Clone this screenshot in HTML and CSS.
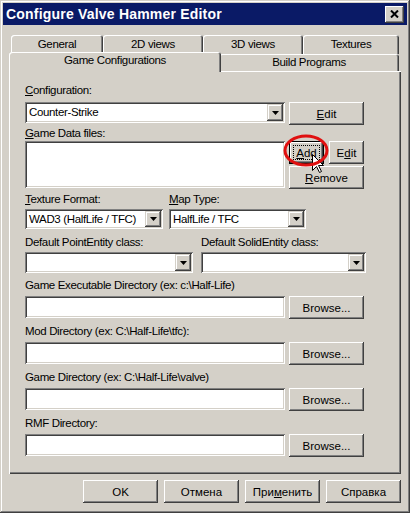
FILE: index.html
```html
<!DOCTYPE html>
<html lang="en">
<head>
    <meta charset="UTF-8">
    <title>Configure Valve Hammer Editor</title>
    <link rel="stylesheet" href="styles.css">
</head>
<body>
    <div class="window">
        <div class="titlebar">
            <span class="title">Configure Valve Hammer Editor</span>
            <button class="close">
                <svg width="9" height="8" viewBox="0 0 9 8"><path d="M1 0.5 L8 7.5 M8 0.5 L1 7.5" stroke="#000" stroke-width="2"/></svg>
            </button>
        </div>
        <div class="content">
            <div class="tabs">
                <div class="tabRow">
                    <div class="tab tabGeneral">General</div>
                    <div class="tab tab2d">2D views</div>
                    <div class="tab tab3d">3D views</div>
                    <div class="tab tabTextures">Textures</div>
                </div>
                <div class="tabRow front">
                    <div class="tab tabGame active">Game Configurations</div>
                    <div class="tab tabBuild">Build Programs</div>
                </div>
            </div>

            <div class="panel">
                <div class="label"><u>C</u>onfiguration:</div>
                <div class="row">
                    <div class="combo wide">
                        <span class="value">Counter-Strike</span>
                        <span class="drop"><svg width="7" height="4" viewBox="0 0 7 4"><path d="M0 0 H7 L3.5 4 Z" fill="#000"/></svg></span>
                    </div>
                    <button class="btn"><span><u>E</u>dit</span></button>
                </div>

                <div class="label gameData"><u>G</u>ame Data files:</div>
                <div class="row">
                    <div class="listbox"></div>
                    <div class="sideBtns">
                        <div class="btnPair">
                            <button class="btn small focused"><span class="focus"><u>A</u>dd</span></button>
                            <button class="btn small"><span>E<u>d</u>it</span></button>
                            <svg class="cursor" width="12" height="19" viewBox="0 0 12 19"><path d="M0.5 0.5 V16.5 L4.5 12.5 L7.5 18.5 L9.5 17.5 L6.5 11.5 H11.5 Z" fill="#fff" stroke="#000"/></svg>
                            <svg class="mark" width="46" height="33" viewBox="0 0 46 33"><ellipse cx="23" cy="16.5" rx="21" ry="14.5" fill="none" stroke="#e01010" stroke-width="3"/></svg>
                        </div>
                        <button class="btn"><span><u>R</u>emove</span></button>
                    </div>
                </div>

                <div class="pair texRow">
                    <div class="col colTex">
                        <div class="label"><u>T</u>exture Format:</div>
                        <div class="combo short">
                            <span class="value">WAD3 (HalfLife / TFC)</span>
                            <span class="drop"><svg width="7" height="4" viewBox="0 0 7 4"><path d="M0 0 H7 L3.5 4 Z" fill="#000"/></svg></span>
                        </div>
                    </div>
                    <div class="col colMap">
                        <div class="label"><u>M</u>ap Type:</div>
                        <div class="combo short">
                            <span class="value">HalfLife / TFC</span>
                            <span class="drop"><svg width="7" height="4" viewBox="0 0 7 4"><path d="M0 0 H7 L3.5 4 Z" fill="#000"/></svg></span>
                        </div>
                    </div>
                </div>

                <div class="pair entRow">
                    <div class="col colPoint">
                        <div class="label">Default PointEntity class:</div>
                        <div class="combo">
                            <span class="value"></span>
                            <span class="drop"><svg width="7" height="4" viewBox="0 0 7 4"><path d="M0 0 H7 L3.5 4 Z" fill="#000"/></svg></span>
                        </div>
                    </div>
                    <div class="col colSolid">
                        <div class="label">Default SolidEntity class:</div>
                        <div class="combo">
                            <span class="value"></span>
                            <span class="drop"><svg width="7" height="4" viewBox="0 0 7 4"><path d="M0 0 H7 L3.5 4 Z" fill="#000"/></svg></span>
                        </div>
                    </div>
                </div>

                <div class="label dirLabel">Game Executable Directory (ex: c:\Half-Life)</div>
                <div class="row">
                    <div class="field"></div>
                    <button class="btn"><span>Browse...</span></button>
                </div>

                <div class="label dirLabel">Mod Directory (ex: C:\Half-Life\tfc):</div>
                <div class="row">
                    <div class="field"></div>
                    <button class="btn"><span>Browse...</span></button>
                </div>

                <div class="label dirLabel">Game Directory (ex: C:\Half-Life\valve)</div>
                <div class="row">
                    <div class="field"></div>
                    <button class="btn"><span>Browse...</span></button>
                </div>

                <div class="label dirLabel">RMF Directory:</div>
                <div class="row">
                    <div class="field"></div>
                    <button class="btn"><span>Browse...</span></button>
                </div>
            </div>

            <div class="actions">
                <button class="btn">OK</button>
                <button class="btn">Отмена</button>
                <button class="btn">При<u>м</u>енить</button>
                <button class="btn">Справка</button>
            </div>
        </div>
    </div>
</body>
</html>
```

FILE: styles.css
```css
*{margin:0;padding:0;box-sizing:border-box;}
body{background:#d4d0c8;font-family:"Liberation Sans",Arial,sans-serif;font-size:11.5px;letter-spacing:-0.35px;color:#000;}
u{text-underline-offset:1px;}

/* window frame */
.window{width:410px;height:513px;padding:3px;background:#d4d0c8;
box-shadow:inset -1px -1px #404040,inset 1px 1px #d4d0c8,inset -2px -2px #808080,inset 2px 2px #fff;}
.titlebar{height:22px;background:#0a1a66;display:flex;align-items:center;justify-content:space-between;padding:0 3px 0 3px;}
.title{color:#fff;font-weight:bold;font-size:14px;letter-spacing:0.2px;}
.close{width:19px;height:17px;border:0;background:#d4d0c8;display:flex;align-items:center;justify-content:center;
box-shadow:inset -1px -1px #404040,inset 1px 1px #fff,inset -2px -2px #808080,inset 2px 2px #d4d0c8;}

.content{padding:10px 6px 0 6px;}

/* tabs */
.tabRow{display:flex;align-items:flex-start;margin-left:2px;}
.tab{height:19px;line-height:19px;text-align:center;background:#d4d0c8;border-radius:3px 3px 0 0;
box-shadow:inset 1px 1px #fff,inset -1px 0 #404040,inset -2px 0 #808080;}
.tabGeneral{width:92px;}
.tab2d{width:100px;}
.tab3d{width:100px;}
.tabTextures{width:96px;}
.front .tab{height:17px;line-height:17px;}
.tabGame{width:208px;}
.tabBuild{width:180px;line-height:18px;}
.front .tab.active{width:212px;height:20px;line-height:16px;margin:-2px -2px -1px;position:relative;z-index:1;}

/* page */
.panel{height:403px;padding:13px 0 0 16px;
box-shadow:inset 1px 1px #fff,inset -1px -1px #404040,inset -2px -2px #808080;}
.label{height:13px;line-height:13px;white-space:nowrap;margin-bottom:5px;}
.row{display:flex;align-items:flex-start;gap:4px;}
.gameData{margin-top:2px;margin-bottom:1px;}
.dirLabel{margin-top:6px;margin-bottom:4px;}

.field{width:260px;height:22px;background:#fff;
box-shadow:inset 1px 1px #808080,inset -1px -1px #fff,inset 2px 2px #404040,inset -2px -2px #d4d0c8;}
.listbox{width:260px;height:47px;background:#fff;
box-shadow:inset 1px 1px #808080,inset -1px -1px #fff,inset 2px 2px #404040,inset -2px -2px #d4d0c8;}

.combo{display:flex;align-items:stretch;height:21px;padding:2px;background:#fff;
box-shadow:inset 1px 1px #808080,inset -1px -1px #fff,inset 2px 2px #404040,inset -2px -2px #d4d0c8;}
.combo.wide{width:260px;}
.combo.short{height:20px;}
.combo .value{flex:1;padding-left:2px;line-height:17px;white-space:nowrap;overflow:hidden;}
.combo.short .value{line-height:16px;}
.drop{width:16px;display:flex;align-items:center;justify-content:center;background:#d4d0c8;
box-shadow:inset -1px -1px #404040,inset 1px 1px #d4d0c8,inset -2px -2px #808080,inset 2px 2px #fff;}

/* buttons */
.btn{width:75px;height:23px;border:0;font:inherit;color:inherit;background:#d4d0c8;display:flex;align-items:center;justify-content:center;
box-shadow:inset -1px -1px #404040,inset 1px 1px #fff,inset -2px -2px #808080,inset 2px 2px #d4d0c8;}
.btn.small{width:35px;}
.btn.focused{padding:4px;box-shadow:inset 0 0 0 1px #000,inset -2px -2px #404040,inset 2px 2px #fff,inset -3px -3px #808080;}
.focus{flex:1;align-self:stretch;display:flex;align-items:center;justify-content:center;outline:1px dotted #000;outline-offset:-1px;}

.sideBtns{display:flex;flex-direction:column;gap:2px;}
.btnPair{display:flex;gap:5px;position:relative;}
.cursor{position:absolute;left:23px;top:13px;}
.mark{position:absolute;left:-6px;top:-7px;}

.pair{display:flex;}
.texRow{margin-top:4px;gap:6px;}
.texRow .label{margin-bottom:3px;}
.colTex{width:138px;}
.colMap{width:137px;}
.entRow{margin-top:7px;gap:8px;}
.entRow .label{margin-bottom:3px;}
.colPoint{width:168px;}
.colSolid{width:165px;}

.actions{display:flex;justify-content:flex-end;gap:6px;margin-top:6px;}
```
